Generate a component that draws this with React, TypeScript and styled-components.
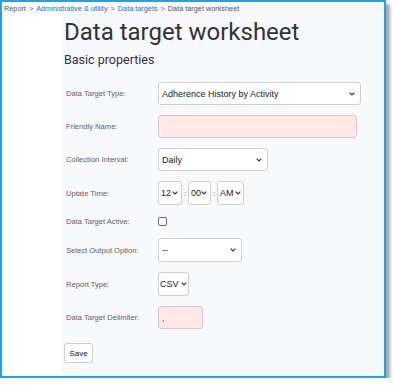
import React from "react";
import styled, { createGlobalStyle } from "styled-components";

const Global = createGlobalStyle`
  html, body { margin: 0; padding: 0; background: #ffffff; }
  * { box-sizing: border-box; }
`;

const Frame = styled.div`
  width: 386px;
  height: 378px;
  border: 2px solid #1fa3e3;
  box-shadow: 4px 4px 3px rgba(0, 0, 0, 0.35);
  background: linear-gradient(to right, #ffffff 59px, #f8f9fc 59px);
  display: flex;
  flex-direction: column;
  overflow: hidden;
`;

const Breadcrumb = styled.div`
  padding: 1px 0 0 2px;
  height: 12px;
  font-family: "Liberation Sans", Arial, sans-serif;
  font-size: 7.3px;
  line-height: 11px;
  color: #555;
  white-space: nowrap;
`;

const Crumb = styled.a<{ $link?: boolean }>`
  color: ${(p) => (p.$link ? "#2b73b6" : "#555")};
  text-decoration: none;
`;

const Sep = styled.span`
  color: #666;
  margin: 0 3px;
`;

const Panel = styled.main`
  margin-left: 59px;
  padding: 4px 0 0 3px;
  display: flex;
  flex-direction: column;
`;

const Title = styled.h1`
  margin: 0;
  font-family: Roboto, "Liberation Sans", sans-serif;
  font-weight: 400;
  font-size: 24px;
  line-height: 28px;
  color: #333;
`;

const Subtitle = styled.h2`
  margin: 6px 0 0 0;
  font-family: Roboto, "Liberation Sans", sans-serif;
  font-weight: 400;
  font-size: 12.5px;
  line-height: 15px;
  color: #333;
`;

const Form = styled.form`
  margin-top: 15px;
  display: flex;
  flex-direction: column;
  gap: 10px;
`;

const Row = styled.div<{ $h?: number }>`
  display: flex;
  align-items: center;
  min-height: ${(p) => p.$h ?? 23}px;
`;

const Label = styled.label`
  width: 94px;
  padding-left: 2px;
  font-family: "Liberation Sans", Arial, sans-serif;
  font-size: 7.6px;
  color: #5f5f5f;
  flex-shrink: 0;
`;

const SelectWrap = styled.div<{ $w: number; $h?: number }>`
  position: relative;
  width: ${(p) => p.$w}px;
  height: ${(p) => p.$h ?? 24}px;
`;

const NativeSelect = styled.select<{ $pad: number; $padR: number }>`
  appearance: none;
  -webkit-appearance: none;
  width: 100%;
  height: 100%;
  margin: 0;
  padding: 0 ${(p) => p.$padR}px 0 ${(p) => p.$pad}px;
  border: 1px solid #cfcfcf;
  border-radius: 3px;
  background: #ffffff;
  font-family: "Liberation Sans", Arial, sans-serif;
  font-size: 9px;
  color: #222;
  outline: none;
  text-overflow: clip;
`;

const Chevron = styled.svg<{ $right: number }>`
  position: absolute;
  right: ${(p) => p.$right}px;
  top: 50%;
  width: 6px;
  height: 4px;
  margin-top: -2px;
  pointer-events: none;
`;

const TextInput = styled.input<{ $w: number }>`
  width: ${(p) => p.$w}px;
  height: 23px;
  margin: 0;
  padding: 0 3px;
  border: 1px solid #d8c9c8;
  border-radius: 3px;
  background: #fde8e5;
  font-family: "Liberation Sans", Arial, sans-serif;
  font-size: 9px;
  color: #555;
  outline: none;
`;

const TimeGroup = styled.div`
  display: flex;
  align-items: center;
`;

const Colon = styled.span`
  width: 6px;
  text-align: center;
  font-family: "Liberation Sans", Arial, sans-serif;
  font-size: 8px;
  color: #555;
`;

const CheckBox = styled.input`
  appearance: none;
  -webkit-appearance: none;
  width: 9px;
  height: 9px;
  margin: 0;
  border: 1px solid #6b6b6b;
  border-radius: 2px;
  background: #fff;
`;

const SaveButton = styled.button`
  margin-top: 4px;
  align-self: flex-start;
  width: 29px;
  height: 20px;
  padding: 0;
  border: 1px solid #cdcdcd;
  border-radius: 3px;
  background: #ffffff;
  font-family: "Liberation Sans", Arial, sans-serif;
  font-size: 8px;
  color: #111;
`;

function Select({
  w,
  h,
  value,
  pad = 3,
  padR = 12,
  right = 6,
}: {
  w: number;
  h?: number;
  value: string;
  pad?: number;
  padR?: number;
  right?: number;
}) {
  return (
    <SelectWrap $w={w} $h={h}>
      <NativeSelect $pad={pad} $padR={padR} defaultValue={value}>
        <option>{value}</option>
      </NativeSelect>
      <Chevron $right={right} viewBox="0 0 6 4">
        <path d="M0.6 0.6 L3 3 L5.4 0.6" fill="none" stroke="#333" strokeWidth="1.1" />
      </Chevron>
    </SelectWrap>
  );
}

export default function App() {
  return (
    <>
      <Global />
      <Frame>
        <Breadcrumb>
          <Crumb>Report</Crumb>
          <Sep>&gt;</Sep>
          <Crumb $link>Administrative &amp; utility</Crumb>
          <Sep>&gt;</Sep>
          <Crumb $link>Data targets</Crumb>
          <Sep>&gt;</Sep>
          <Crumb>Data target worksheet</Crumb>
        </Breadcrumb>
        <Panel>
          <Title>Data target worksheet</Title>
          <Subtitle>Basic properties</Subtitle>
          <Form onSubmit={(e) => e.preventDefault()}>
            <Row>
              <Label>Data Target Type:</Label>
              <Select w={203} h={23} value="Adherence History by Activity" />
            </Row>
            <Row>
              <Label>Friendly Name:</Label>
              <TextInput $w={199} />
            </Row>
            <Row>
              <Label>Collection Interval:</Label>
              <Select w={110} h={23} value="Daily" />
            </Row>
            <Row $h={24}>
              <Label>Uptate Time:</Label>
              <TimeGroup>
                <Select w={24} value="12" pad={2} padR={0} right={4} />
                <Colon>:</Colon>
                <Select w={23} value="00" pad={2} padR={0} right={4} />
                <Colon>:</Colon>
                <Select w={27} value="AM" pad={2} padR={0} right={3} />
              </TimeGroup>
            </Row>
            <Row $h={13}>
              <Label>Data Target Active:</Label>
              <CheckBox type="checkbox" />
            </Row>
            <Row $h={24}>
              <Label>Select Output Option:</Label>
              <Select w={84} value="--" />
            </Row>
            <Row $h={24}>
              <Label>Report Type:</Label>
              <Select w={31} value="CSV" pad={1} padR={0} right={2} />
            </Row>
            <Row>
              <Label>Data Target Delimiter:</Label>
              <TextInput $w={45} defaultValue="," />
            </Row>
            <SaveButton type="submit">Save</SaveButton>
          </Form>
        </Panel>
      </Frame>
    </>
  );
}
